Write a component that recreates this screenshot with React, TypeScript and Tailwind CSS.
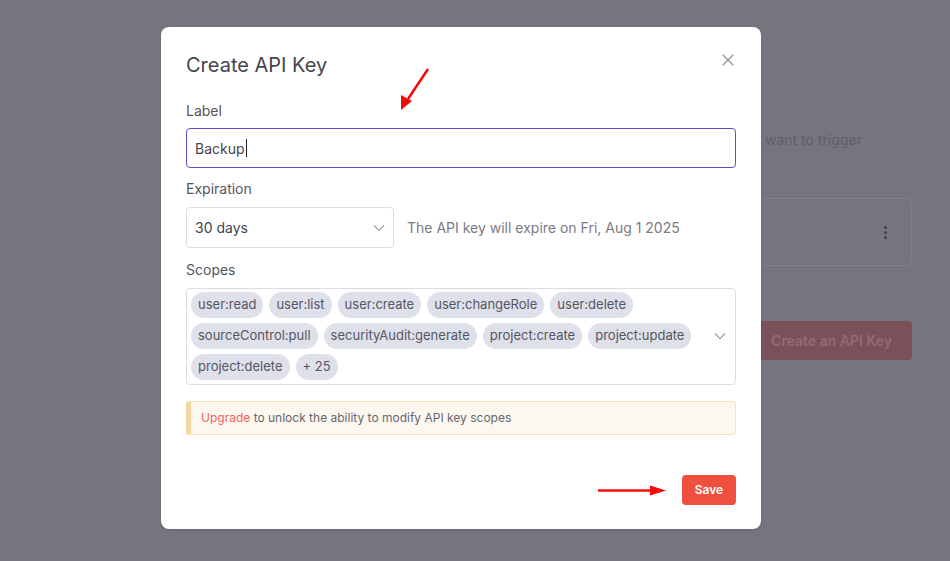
import { X } from "lucide-react";

const scopes = [
  "user:read",
  "user:list",
  "user:create",
  "user:changeRole",
  "user:delete",
  "sourceControl:pull",
  "securityAudit:generate",
  "project:create",
  "project:update",
  "project:delete",
];

function Chevron({ className = "" }: { className?: string }) {
  return (
    <svg width="12" height="8" viewBox="0 0 12 8" fill="none" className={className}>
      <path d="M1 1.5l5 5 5-5" stroke="#9a9aa4" strokeWidth="1.1" />
    </svg>
  );
}

// the page behind the modal; only its right edge shows past the dialog
function BackgroundPage() {
  return (
    <div className="flex h-full w-full flex-col pl-[220px] pr-[38px] pt-[128px]">
      <p className="pl-[545px] text-[14px] leading-6 text-[#5f5d6a]">want to trigger</p>
      <div className="mt-[46px] flex h-[68px] items-center justify-end rounded-md border border-[#817f8a] pr-[24px]">
        <div className="flex flex-col gap-[2px]">
          <span className="h-[3px] w-[3px] rounded-full bg-[#3f3e4a]" />
          <span className="h-[3px] w-[3px] rounded-full bg-[#3f3e4a]" />
          <span className="h-[3px] w-[3px] rounded-full bg-[#3f3e4a]" />
        </div>
      </div>
      <div className="mt-[55px] flex justify-end">
        <div className="flex h-[39px] items-center rounded-[4px] bg-[#7b5059] px-[20px] text-[14px] font-semibold text-[#8f6c76]">
          Create an API Key
        </div>
      </div>
    </div>
  );
}

function Modal() {
  return (
    <div className="absolute left-[161px] top-[27px] flex h-[502px] w-[600px] flex-col rounded-lg bg-white px-[25px] pt-[24px] shadow-sm">
      <div className="flex items-start justify-between">
        <h2 className="text-[20px] leading-7 text-[#45454d]">Create API Key</h2>
        <button type="button" className="-mr-[2px] -mt-[1px] text-[#8a8a94]">
          <X size={20} strokeWidth={1.3} />
        </button>
      </div>

      <label className="mt-[22px] text-[14px] leading-5 text-[#555560]">Label</label>
      <div className="mt-[7px] flex h-[40px] items-center rounded-[4px] border border-[#5d4fc9] px-[8px] text-[14px] text-[#45454d]">
        Backup
        <span className="ml-[1px] h-[18px] w-px bg-[#222]" />
      </div>

      <label className="mt-[11px] text-[14px] leading-5 text-[#555560]">Expiration</label>
      <div className="mt-[8px] flex items-center gap-[13px]">
        <div className="flex h-[41px] w-[208px] items-center justify-between rounded-[4px] border border-[#dcdce4] pl-[8px] pr-[8px] text-[14px] text-[#45454d]">
          30 days
          <Chevron />
        </div>
        <span className="text-[14px] text-[#7b7b86]">The API key will expire on Fri, Aug 1 2025</span>
      </div>

      <label className="mt-[12px] text-[14px] leading-5 text-[#555560]">Scopes</label>
      <div className="mt-[8px] flex items-center rounded-[4px] border border-[#dcdce4] pb-[4px] pl-[4px] pr-[9px] pt-[3px]">
        <div className="flex w-[520px] flex-wrap gap-x-[6px] gap-y-[5px]">
          {scopes.map((s) => (
            <span
              key={s}
              className="flex h-[26px] items-center rounded-full bg-[#dfe1ea] px-[7px] text-[13px] text-[#55555f]"
            >
              {s}
            </span>
          ))}
          <span className="flex h-[26px] items-center rounded-full bg-[#dfe1ea] px-[7px] text-[13px] text-[#55555f]">
            + 25
          </span>
        </div>
        <Chevron className="ml-auto" />
      </div>

      <div className="mt-[16px] flex h-[34px] items-center rounded-[3px] border border-l-[5px] border-[#f6e2bb] border-l-[#f4d8a2] bg-[#fdf8ef] px-[10px] text-[12px] text-[#66666f]">
        <span className="text-[#f0635a]">Upgrade</span>
        <span>&nbsp;to unlock the ability to modify API key scopes</span>
      </div>

      <div className="mt-[40px] flex justify-end">
        <button
          type="button"
          className="flex h-[30px] w-[54px] items-center justify-center rounded-[4px] bg-[#ee4f3e] text-[12px] font-semibold text-white"
        >
          Save
        </button>
      </div>
    </div>
  );
}

function Arrows() {
  return (
    <svg className="pointer-events-none absolute left-0 top-0" width="950" height="561">
      <line x1="428" y1="69" x2="408" y2="99" stroke="#f50a0a" strokeWidth="2.5" />
      <polygon points="401,110 401,95 412,101" fill="#f50a0a" />
      <line x1="598" y1="490.5" x2="652" y2="490.5" stroke="#f50a0a" strokeWidth="2.5" />
      <polygon points="666,490.5 650,485.5 650,495.5" fill="#f50a0a" />
    </svg>
  );
}

export default function App() {
  return (
    <div
      className="relative h-[561px] w-[950px] overflow-hidden bg-[#76747f]"
      style={{ fontFamily: "Inter, 'Noto Sans', sans-serif" }}
    >
      <BackgroundPage />
      <Modal />
      <Arrows />
    </div>
  );
}
